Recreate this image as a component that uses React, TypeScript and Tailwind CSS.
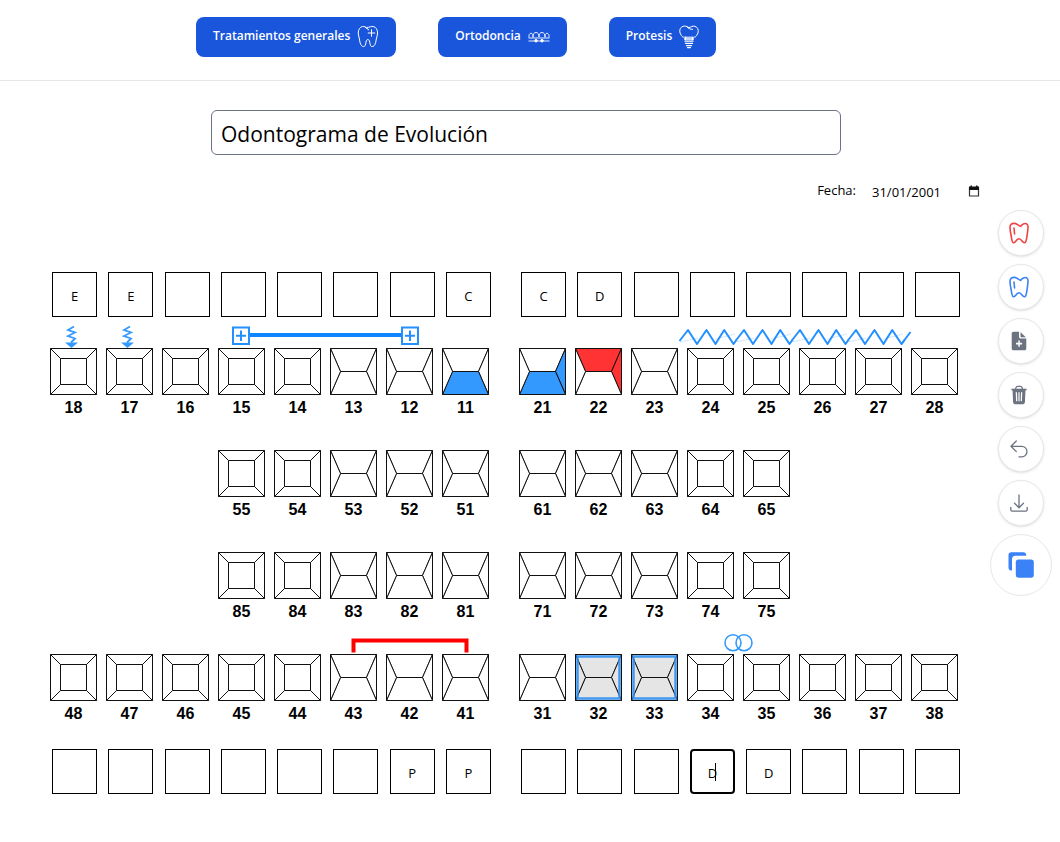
import { useState } from "react";
import type { ReactNode } from "react";

const BLUE = "#3399ff";
const RED = "#ff3333";

type Face = "top" | "right" | "bottom" | "left" | "center";
type Fills = Partial<Record<Face, string>>;

const FILLS: Record<number, Fills> = {
  11: { bottom: BLUE },
  21: { bottom: BLUE, right: BLUE },
  22: { top: RED, right: RED },
};

const CROWNED = [32, 33];

const ROWS: { left: number[]; right: number[] }[] = [
  { left: [18, 17, 16, 15, 14, 13, 12, 11], right: [21, 22, 23, 24, 25, 26, 27, 28] },
  { left: [55, 54, 53, 52, 51], right: [61, 62, 63, 64, 65] },
  { left: [85, 84, 83, 82, 81], right: [71, 72, 73, 74, 75] },
  { left: [48, 47, 46, 45, 44, 43, 42, 41], right: [31, 32, 33, 34, 35, 36, 37, 38] },
];

function ToothDrawing({ id }: { id: number }) {
  const fills = FILLS[id] ?? {};
  const crowned = CROWNED.includes(id);
  const base = crowned ? "#e5e5e5" : "#ffffff";
  const front = id % 10 <= 3;
  const faces: [Face, string][] = front
    ? [
        ["top", "0.5,0.5 46.5,0.5 36.5,23.5 10.5,23.5"],
        ["right", "46.5,0.5 46.5,46.5 36.5,23.5"],
        ["bottom", "0.5,46.5 46.5,46.5 36.5,23.5 10.5,23.5"],
        ["left", "0.5,0.5 0.5,46.5 10.5,23.5"],
      ]
    : [
        ["top", "0.5,0.5 46.5,0.5 36.5,10.5 10.5,10.5"],
        ["right", "46.5,0.5 46.5,46.5 36.5,36.5 36.5,10.5"],
        ["bottom", "0.5,46.5 46.5,46.5 36.5,36.5 10.5,36.5"],
        ["left", "0.5,0.5 0.5,46.5 10.5,36.5 10.5,10.5"],
        ["center", "10.5,10.5 36.5,10.5 36.5,36.5 10.5,36.5"],
      ];
  return (
    <svg viewBox="0 0 47 47" className="block size-[47px]" aria-hidden="true">
      {faces.map(([face, points]) => (
        <polygon key={face} points={points} fill={fills[face] ?? base} stroke="#111" strokeWidth="1" />
      ))}
      {crowned && (
        <rect x="2.500" y="2.500" width="42" height="42" fill="none" stroke="#2f8ff0" strokeWidth="2.500" opacity="0.900" />
      )}
    </svg>
  );
}

function Tooth({ id }: { id: number }) {
  return (
    <button type="button" className="flex w-[47px] flex-col items-center">
      <ToothDrawing id={id} />
      <span className="font-['Liberation_Sans',sans-serif] text-base leading-[26px] font-bold">{id}</span>
    </button>
  );
}

function ToothRow({ row }: { row: number }) {
  return (
    <div className="flex gap-[30px]">
      <div className="flex w-[439px] justify-end gap-[9px]">
        {ROWS[row].left.map((id) => (
          <Tooth key={id} id={id} />
        ))}
      </div>
      <div className="flex w-[439px] gap-[9px]">
        {ROWS[row].right.map((id) => (
          <Tooth key={id} id={id} />
        ))}
      </div>
    </div>
  );
}

function CodeBox({ id, initial, active }: { id: number; initial: string; active: boolean }) {
  const [value, setValue] = useState(initial);
  const frame = active ? "rounded border-2" : "border";
  return (
    <div className="relative">
      <input
        aria-label={`Código ${id}`}
        value={value}
        maxLength={3}
        onChange={(e) => setValue(e.target.value)}
        className={`block size-[45px] border-black bg-white pt-0.5 text-center text-[13px] outline-none ${frame}`}
      />
      {active && <span className="absolute top-3.5 left-[25px] h-[18px] w-px bg-black" />}
    </div>
  );
}

function CodeRow({ row, codes, active }: { row: number; codes: Record<number, string>; active?: number }) {
  return (
    <div className="flex gap-[30px] pl-0.5">
      {[ROWS[row].left, ROWS[row].right].map((side) => (
        <div key={side[0]} className="flex w-[439px] justify-between">
          {side.map((id) => (
            <CodeBox key={id} id={id} initial={codes[id] ?? ""} active={active === id} />
          ))}
        </div>
      ))}
    </div>
  );
}

function UpperFindings() {
  return (
    <svg viewBox="0 0 908 31" className="block h-[31px] w-[908px]" fill="none" aria-hidden="true">
      {[0, 56].map((x) => (
        <g key={x} transform={`translate(${x} 0)`}>
          <path d="M24 9.500l-6 3.500 7 2.500-7 3.500 7 2.500-4 4" stroke={BLUE} strokeWidth="1.800" />
          <path d="M15 25.500h13l-6.500 5.500z" fill={BLUE} />
        </g>
      ))}
      <path d="M199 18h153" stroke="#0d86ff" strokeWidth="4" />
      {[182, 351].map((x) => (
        <g key={x} stroke="#2490ff" strokeWidth="2">
          <rect x={x + 1} y="10.500" width="16" height="16.500" fill="#fff" />
          <path d={`M${x + 4} 18.700h10M${x + 9} 13.500v10.500`} />
        </g>
      ))}
      {[0, 56, 112, 168].map((x) => (
        <g key={x} transform={`translate(${x} 0)`}>
          <path d="M630 25l18-4M665 22l20-5" stroke="#cfe6ff" strokeWidth="1" />
          <path
            d="M629.500 24l8.500-11 9 14 9.500-14 9 14 8.700-14 9.300 14 3-4"
            stroke="#2490ff"
            strokeWidth="2"
            strokeLinejoin="round"
          />
        </g>
      ))}
      <path d="M851.500 27l9-12" stroke="#2490ff" strokeWidth="2" />
    </svg>
  );
}

function LowerFindings() {
  return (
    <svg viewBox="0 2 908 29" className="block h-[29px] w-[908px]" fill="none" aria-hidden="true">
      <path d="M303.500 29.500v-12h113v12" stroke="#ff0000" strokeWidth="4" />
      <circle cx="683" cy="19.700" r="8" stroke={BLUE} strokeWidth="1.600" />
      <circle cx="694" cy="19.700" r="8" stroke={BLUE} strokeWidth="1.600" />
    </svg>
  );
}

function ToothPlusIcon() {
  return (
    <svg viewBox="0 0 22 24" className="h-6 w-[22px]" fill="none" stroke="currentColor" strokeWidth="1" strokeLinecap="round" strokeLinejoin="round" aria-hidden="true">
      <path d="M10.500 3.900C8.900 2 7.300 1.200 5.600 1.500 2.800 2 1.300 4.600 1.200 8c0 2.300.9 3.900 1.200 6 .5 2.700.6 5 2.300 6.800 1 1 2.700 1.100 3.400-.1.800-1.600.7-3.400 1.200-5 .6-1.500 2.500-1.500 3.100 0 .5 1.600.4 3.400 1.200 5 .7 1.200 2.400 1.100 3.400.1 1.700-1.800 1.800-4.100 2.300-6.800.4-2.100 1.300-3.700 1.300-6-.1-3.400-1.600-6-4.400-6.500-2-.3-3.900 1-6 .9M8.300 2.200l3.500 2.700M14.500 4.700v6.600M11.200 8h6.600" />
    </svg>
  );
}

function BracesIcon() {
  return (
    <svg viewBox="0 0 22 12" className="h-3 w-[22px]" fill="none" stroke="currentColor" strokeWidth="0.900" aria-hidden="true">
      <path d="M1 6.500C.5 4 1.800 2.200 3 2.200S5.400 4 5 6.500M5 6C4.800 3 6 1.500 8 1.500S11.200 3.500 11 6M11 6c-.2-3 1-4.500 3-4.500s3.200 2 3 4.500M17 6.500c-.4-2.500.8-4.300 2-4.300s2.500 1.800 2 4.300M.5 7h21M.5 10h21" />
      <circle cx="8" cy="9.700" r="1.300" fill="currentColor" />
      <circle cx="14" cy="9.700" r="1.300" fill="currentColor" />
    </svg>
  );
}

function ImplantIcon() {
  return (
    <svg viewBox="0 0 20 24" className="h-6 w-5" fill="none" stroke="currentColor" strokeWidth="1" strokeLinecap="round" strokeLinejoin="round" aria-hidden="true">
      <path d="M10 2.600C8 1.200 5.800.7 4 1.300 1.500 2.200.5 4.500.8 6.900c.2 1.600 1 2.600 1.600 3.600.8 1.400 1.600 1.700 3.200 1.700h8.800c1.600 0 2.400-.3 3.200-1.700.6-1 1.400-2 1.600-3.600.3-2.400-.7-4.700-3.200-5.600-2.300-.8-3.900.8-6 1.300M8 2c1.600 1.600 3.400 2.300 5.500 2.400" />
      <path d="M5.500 14h9M6 16.200h8M6.500 18.400h7M7.500 20.600h5M8.500 22.600h3M6.500 12.500v2M13.500 12.500v2" strokeWidth="1.300" />
    </svg>
  );
}

function ToothIcon() {
  return (
    <svg viewBox="0 0 20 22" className="h-[22px] w-5" fill="none" stroke="currentColor" strokeWidth="1.600" strokeLinecap="round" strokeLinejoin="round" aria-hidden="true">
      <path d="M11.500 4.300C13 3 14 1.500 16 1.500c2.300 0 3.200 1.700 3 3.700-.2 2.800-.4 5.800-1 8.800-.4 2.500-.7 6.600-2.500 6.800-2.300.2-2.700-4-5.500-4s-3.200 4.200-5.500 4C2.800 20.600 2.700 16.500 2.200 14 1.500 11 1 8 1 5.200 1 2.700 2.600 1.400 5 1.400c3 0 4 2.200 6.800 3.100M5 6l.6 6" />
    </svg>
  );
}

function FilePlusIcon() {
  return (
    <svg viewBox="0 0 16 20" className="h-5 w-4" aria-hidden="true">
      <path fill="currentColor" fillRule="evenodd" d="M2.500.7H8V5.500C8 7 8.800 7.600 10 7.600h5.300v9.900c0 1.100-.7 1.800-1.800 1.800h-11C1.400 19.300.7 18.600.7 17.500v-15C.7 1.400 1.400.7 2.500.7zM7.300 9.500v2.300H5v1.600h2.300v2.300h1.500v-2.300h2.300v-1.600H8.800V9.500z" />
      <path fill="currentColor" d="M9.500 1.200l5.300 5H10.500c-.6 0-1-.4-1-1z" />
    </svg>
  );
}

function TrashIcon() {
  return (
    <svg viewBox="0 0 16 20" className="h-5 w-4" aria-hidden="true">
      <path d="M4.500 4L5 2.600c.3-.8.800-1.200 1.500-1.200h3c.7 0 1.200.4 1.500 1.200l.5 1.400" fill="none" stroke="currentColor" strokeWidth="1.300" />
      <path d="M.4 3.700h15.200v1.600H.4z" fill="currentColor" />
      <path fill="currentColor" fillRule="evenodd" d="M1.500 5h13l-.6 12.300c-.1 1.100-.8 1.900-1.900 1.900H4c-1.100 0-1.800-.8-1.900-1.900zM4.700 7.300l.4 9h1.200l-.3-9zm2.700 0v9h1.200v-9zm2.600 0l-.3 9h1.200l.4-9z" />
    </svg>
  );
}

function UndoIcon() {
  return (
    <svg viewBox="0 0 18 18" className="size-[18px]" fill="none" stroke="currentColor" strokeWidth="1.300" strokeLinecap="round" strokeLinejoin="round" aria-hidden="true">
      <path d="M6.300 1L1 6.300l5.300 5.300M1.200 6.300h10.500a5.300 5.300 0 0 1 0 10.600H9" />
    </svg>
  );
}

function DownloadIcon() {
  return (
    <svg viewBox="0 0 18 18" className="size-[18px]" fill="none" stroke="currentColor" strokeWidth="1.300" strokeLinecap="round" strokeLinejoin="round" aria-hidden="true">
      <path d="M9 1v12.500M4.500 9.200L9 13.700l4.500-4.500M.8 13.500v2.200c0 .9.500 1.400 1.400 1.400h13.600c.9 0 1.400-.5 1.400-1.400v-2.200" />
    </svg>
  );
}

function CopyIcon() {
  return (
    <svg viewBox="0 0 26 26" className="size-[26px]" fill="currentColor" aria-hidden="true">
      <path d="M3.200.3h12.300c1.600 0 2.700 1.100 2.700 2.700v.8H7.300c-2 0-3.300 1.300-3.300 3.300v11.400h-.8c-1.600 0-2.700-1.100-2.700-2.700V3C.5 1.400 1.600.3 3.200.3z" />
      <rect x="7.800" y="7.500" width="18" height="18.300" rx="2.700" />
    </svg>
  );
}

function MenuButton({ label, children }: { label: string; children: ReactNode }) {
  return (
    <button type="button" className="flex h-10 items-center gap-[7px] rounded-lg bg-[#1a56db] px-[17px] text-xs font-semibold text-white">
      <span className="pb-0.5">{label}</span>
      {children}
    </button>
  );
}

function ToolButton({ label, tone, children }: { label: string; tone: string; children: ReactNode }) {
  return (
    <button type="button" aria-label={label} className={`flex size-[46px] items-center justify-center rounded-full border border-[#e5e7eb] bg-white pr-[5px] shadow-sm ${tone}`}>
      {children}
    </button>
  );
}

export default function App() {
  const [title, setTitle] = useState("Odontograma de Evolución");
  const [date, setDate] = useState("31/01/2001");
  return (
    <div className="min-h-screen bg-white font-['Open_Sans','Noto_Sans',sans-serif] text-black">
      <header className="flex h-[81px] gap-[42px] border-b border-[#e5e7eb] pt-[17px] pl-[196px]">
        <MenuButton label="Tratamientos generales">
          <ToothPlusIcon />
        </MenuButton>
        <MenuButton label="Ortodoncia">
          <BracesIcon />
        </MenuButton>
        <MenuButton label="Protesis">
          <ImplantIcon />
        </MenuButton>
      </header>
      <main className="pt-[29px] pr-2">
        <input
          aria-label="Título"
          value={title}
          onChange={(e) => setTitle(e.target.value)}
          className="mx-auto block h-[45px] w-full max-w-[630px] rounded-md border border-[#6b7280] px-[9px] pt-0.5 text-[21px] outline-none"
        />
        <div className="flex">
          <section className="flex-1 pt-6 pr-2.5 pb-12 pl-[50px]">
            <div className="mb-[69px] flex h-6 items-center justify-end">
              <label htmlFor="fecha" className="mr-4 text-[13px]">
                Fecha:
              </label>
              <input id="fecha" value={date} onChange={(e) => setDate(e.target.value)} className="mr-4 w-20 pt-1 text-[13px] outline-none" />
              <button type="button" aria-label="Abrir calendario">
                <svg viewBox="0 0 12 12" className="block size-3" aria-hidden="true">
                  <path d="M1.500 2.500h9v8.500h-9z" fill="none" stroke="#333" strokeWidth="1.200" />
                  <path d="M1 1.500h10V5H1zM2.500.5h1.500v2H2.500zM8 .5h1.500v2H8z" fill="#111" />
                </svg>
              </button>
            </div>
            <CodeRow row={0} codes={{ 18: "E", 17: "E", 11: "C", 21: "C", 22: "D" }} />
            <UpperFindings />
            <div className="flex flex-col gap-[29px]">
              <ToothRow row={0} />
              <ToothRow row={1} />
              <ToothRow row={2} />
            </div>
            <LowerFindings />
            <ToothRow row={3} />
            <div className="mt-[22px]">
              <CodeRow row={3} codes={{ 42: "P", 41: "P", 34: "D", 35: "D" }} active={34} />
            </div>
          </section>
          <aside className="flex flex-col items-center gap-2 pt-[55px]">
            <ToolButton label="Mal estado" tone="text-[#ef4444]">
              <ToothIcon />
            </ToolButton>
            <ToolButton label="Buen estado" tone="text-[#3b82f6]">
              <ToothIcon />
            </ToolButton>
            <ToolButton label="Nuevo" tone="text-[#6b7280]">
              <FilePlusIcon />
            </ToolButton>
            <ToolButton label="Eliminar" tone="text-[#6b7280]">
              <TrashIcon />
            </ToolButton>
            <ToolButton label="Deshacer" tone="text-[#6b7280]">
              <UndoIcon />
            </ToolButton>
            <ToolButton label="Descargar" tone="text-[#6b7280]">
              <DownloadIcon />
            </ToolButton>
            <button type="button" aria-label="Copiar" className="flex size-[62px] items-center justify-center rounded-full border border-[#e5e7eb] bg-white text-[#3b82f6]">
              <CopyIcon />
            </button>
          </aside>
        </div>
      </main>
    </div>
  );
}
